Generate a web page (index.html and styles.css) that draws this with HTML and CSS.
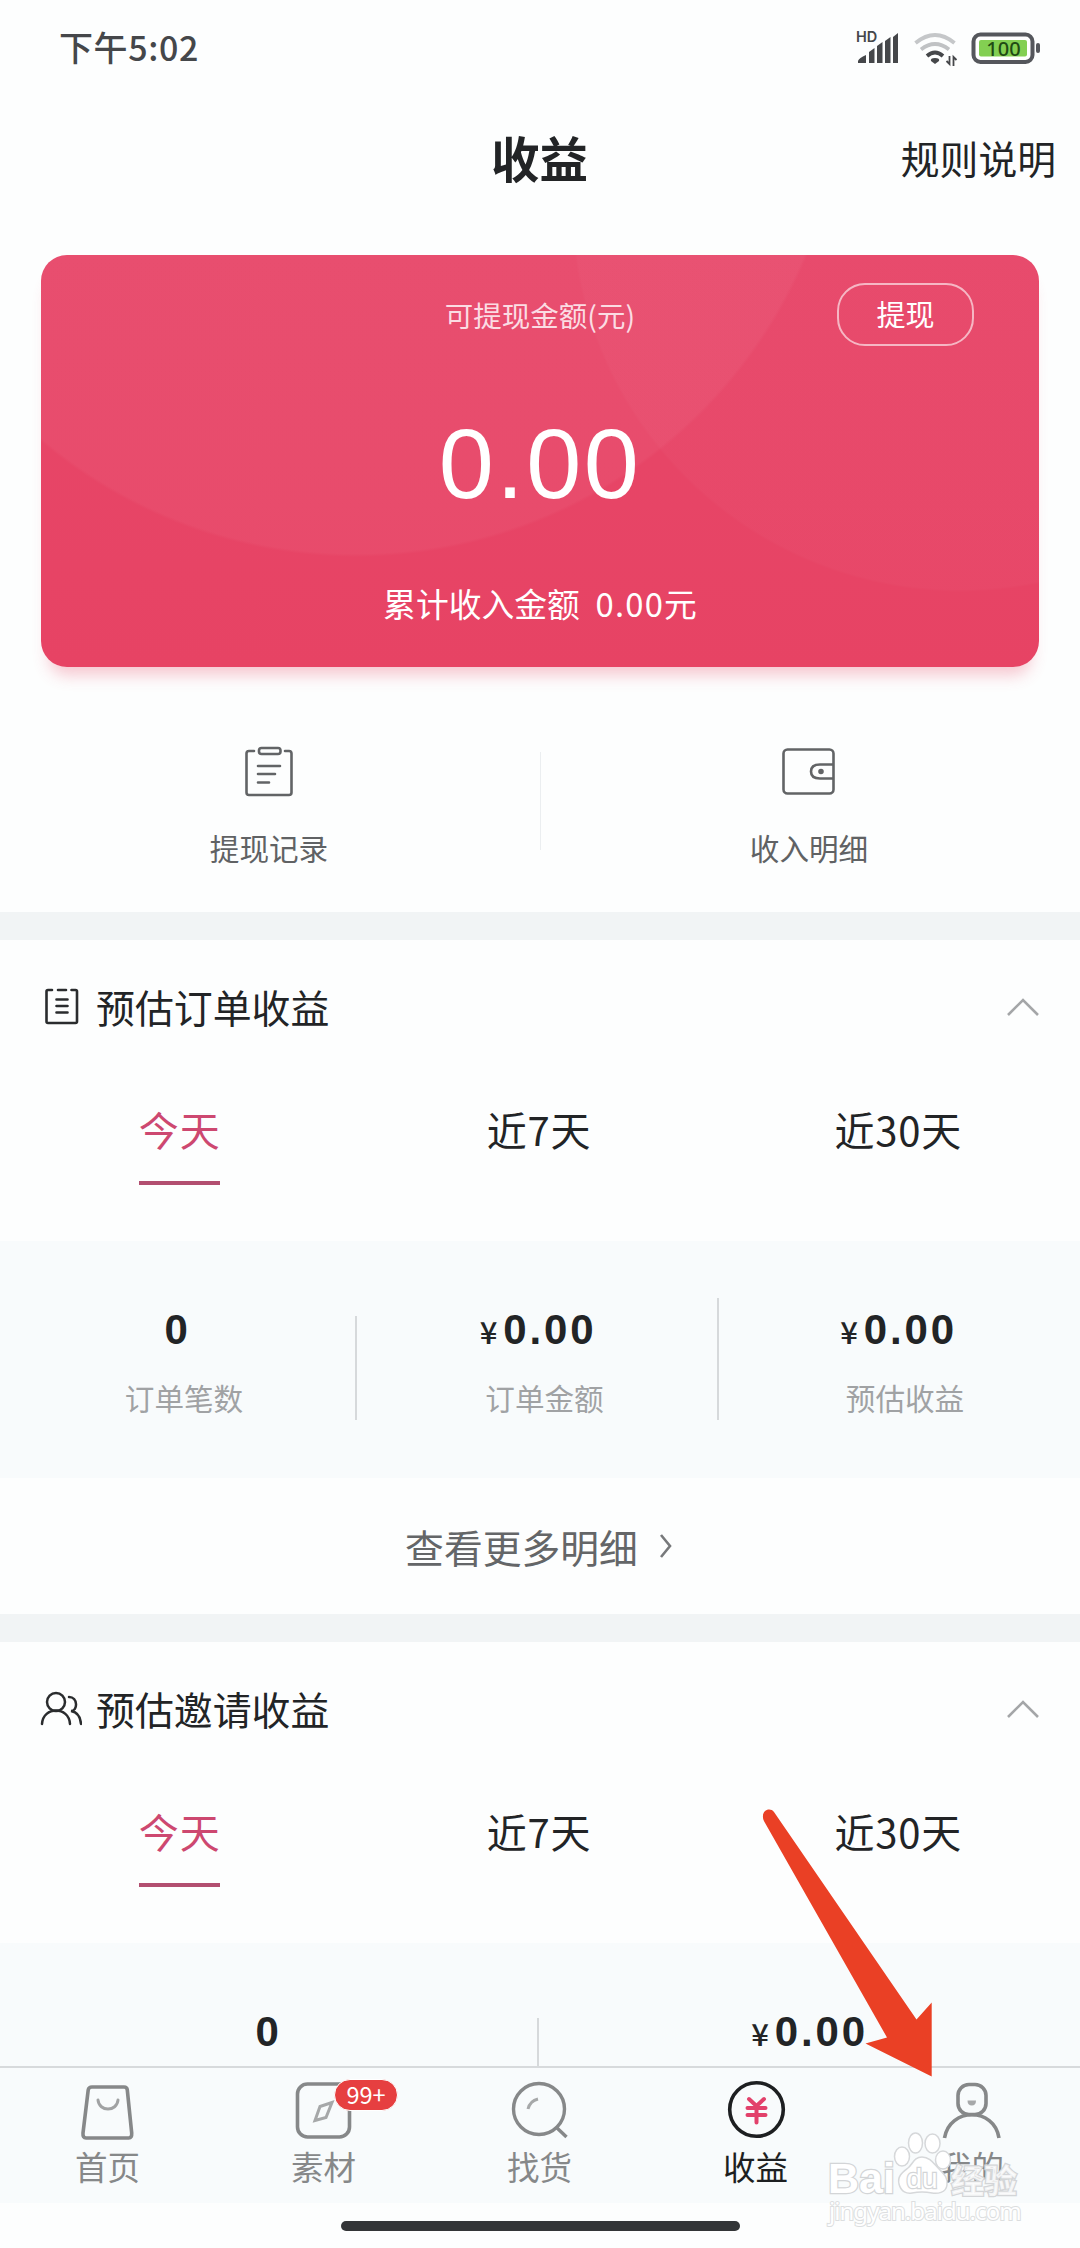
FILE: index.html
```html
<!DOCTYPE html>
<html lang="zh-CN">
<head>
<meta charset="utf-8">
<title>收益</title>
<link rel="stylesheet" href="styles.css">
</head>
<body>
<div class="app">
  <div class="status">
    <span class="time">下午5:02</span>
    <svg class="status-icons" viewBox="856 28 188 40" width="188" height="40">
      <text x="857" y="42" class="hd">HD</text>
      <g fill="#45474a">
        <path d="M859 63v-2q1-3 8-6v8zM870 63V52l5.500-4v15zM878 63V46l5.500-4v21zM886 63V41l5.500-4v26zM894 63V37l5-4v30z"/>
        <path d="M936 64l-4-3q-1-3 4-3t4 3z"/>
      </g>
      <path d="M950.500 56v8l-3-3M954.500 66v-9l3 3" fill="none" stroke="#45474a" stroke-width="1.800"/>
      <g fill="none" stroke-width="3.800">
        <path d="M916.500 43q19.500-16 39 0" stroke="#c5c7c9"/>
        <path d="M922 49.500q14-11 28 0" stroke="#c0c2c4"/>
        <path d="M928 56q8-7 16 0" stroke="#45474a"/>
      </g>
      <rect x="974.500" y="34.500" width="59" height="27.500" rx="7" fill="#fff" stroke="#55575c" stroke-width="4"/>
      <rect x="980" y="40" width="48" height="16.500" rx="2" fill="#83cf52"/>
      <rect x="1037" y="43" width="4" height="10" rx="2" fill="#55575c"/>
      <text x="1004.500" y="56" class="pct">100</text>
    </svg>
  </div>
  <header class="header">
    <h1>收益</h1>
    <a class="rules">规则说明</a>
  </header>

  <main class="content">
    <section class="card">
      <div class="card-label">可提现金额(元)</div>
      <button class="withdraw">提现</button>
      <div class="amount">0.00</div>
      <div class="total">累计收入金额&nbsp; <span>0.00</span>元</div>
    </section>

    <nav class="links">
      <a class="link">
        <svg viewBox="242 744 52 54" width="52" height="54" fill="none" stroke="#626466" stroke-width="2.600" stroke-linecap="round" stroke-linejoin="round">
          <path d="M253 751h-5q-2.500 0-2.500 2.500v39q0 2.500 2.500 2.500h40q2.500 0 2.500-2.500v-39q0-2.500-2.500-2.500h-4"/>
          <rect x="258" y="748" width="21.500" height="6" rx="2.500"/>
          <path d="M257 766h22M257 774h17M257 782.500h11"/>
        </svg>
        <span>提现记录</span>
      </a>
      <a class="link">
        <svg viewBox="783 744 54 54" width="54" height="54" fill="none" stroke="#626466" stroke-width="2.600">
          <rect x="784.500" y="749.500" width="50" height="44" rx="4"/>
          <path d="M834 764.500h-13q-9 0-9 7t9 7h13"/>
          <circle cx="822" cy="771.500" r="1.500" fill="#626466"/>
        </svg>
        <span>收入明细</span>
      </a>
    </nav>

    <section class="panel">
      <div class="panel-head">
        <svg viewBox="40 985 42 46" width="42" height="46" fill="none" stroke="#2a2c2e" stroke-width="2.600" stroke-linecap="round">
          <path d="M52 991h-4q-1.500 0-1.500 1.500v30q0 1.500 1.500 1.500h27.500q1.500 0 1.500-1.500v-30q0-1.500-1.500-1.500h-4M58 991h8M56.500 1000.500h11M56.500 1007h11M56.500 1013.500h11"/>
        </svg>
        <h2>预估订单收益</h2>
        <svg class="fold" viewBox="0 0 34 20" width="34" height="20"><path d="M2 18L17 3l15 15" fill="none" stroke="#a4a6a8" stroke-width="2.600"/></svg>
      </div>
      <div class="tabs"><span class="tab active">今天</span><span class="tab">近7天</span><span class="tab">近30天</span></div>
      <div class="stats three">
        <div class="stat first"><b>0</b><small>订单笔数</small></div>
        <div class="stat"><b><i>¥</i>0.00</b><small>订单金额</small></div>
        <div class="stat"><b><i>¥</i>0.00</b><small>预估收益</small></div>
      </div>
      <a class="more">查看更多明细<svg viewBox="0 0 14 24" width="14" height="24"><path d="M2 1l9 11-9 11" fill="none" stroke="#77797b" stroke-width="2.600"/></svg></a>
    </section>

    <section class="panel">
      <div class="panel-head">
        <svg viewBox="40 984 42 46" width="42" height="46" fill="none" stroke="#2a2c2e" stroke-width="2.500" stroke-linecap="round">
          <circle cx="56" cy="1000" r="9"/>
          <path d="M42 1022c1-18 27-18 28 0M69 995c9 0 9 14 2 14c6 1 9.500 6 10 13"/>
        </svg>
        <h2>预估邀请收益</h2>
        <svg class="fold" viewBox="0 0 34 20" width="34" height="20"><path d="M2 18L17 3l15 15" fill="none" stroke="#a4a6a8" stroke-width="2.600"/></svg>
      </div>
      <div class="tabs"><span class="tab active">今天</span><span class="tab">近7天</span><span class="tab">近30天</span></div>
      <div class="stats two">
        <div class="stat first"><b>0</b></div>
        <div class="stat"><b><i>¥</i>0.00</b></div>
      </div>
    </section>
  </main>

  <nav class="tabbar">
    <a class="item">
      <svg viewBox="76 2078 64 64" width="64" height="64" fill="none" stroke="#868889" stroke-width="3.600" stroke-linejoin="round" stroke-linecap="round">
        <path d="M92 2089h32q3 0 3.300 3l4.400 43q.3 5-3 5H86q-3.300 0-3-5l5.200-43q.5-3 3.800-3z"/>
        <path d="M98 2102c1 12 19 12 20 0" stroke="#a0a2a3" stroke-width="3"/>
      </svg>
      <span>首页</span>
    </a>
    <a class="item">
      <svg viewBox="292 2078 64 64" width="64" height="64" fill="none" stroke="#868889" stroke-width="3.600">
        <rect x="297.500" y="2086" width="52" height="53" rx="10"/>
        <path d="M332 2104.500l-12 4-5 14 11-3z" stroke="#a6a8a9" stroke-width="3"/>
      </svg>
      <em class="badge">99+</em>
      <span>素材</span>
    </a>
    <a class="item">
      <svg viewBox="508 2078 64 64" width="64" height="64" fill="none" stroke="#868889" stroke-width="3.400">
        <circle cx="539" cy="2111" r="25.500"/><path d="M556 2129l10.500 10"/>
        <path d="M528 2111q2-8 10-10" stroke="#a6a8a9" stroke-width="3"/>
      </svg>
      <span>找货</span>
    </a>
    <a class="item current">
      <svg viewBox="724 2078 64 64" width="64" height="64" fill="none" stroke="#1d1f21" stroke-width="3.600">
        <circle cx="756.500" cy="2111.500" r="26.800"/>
        <path d="M749 2101l7.500 7 7.500-7M747.500 2110h18M747.500 2117h18M756.500 2109v15.500" stroke="#e2416b" stroke-width="4" stroke-linecap="round"/>
      </svg>
      <span>收益</span>
    </a>
    <a class="item">
      <svg viewBox="940 2078 64 64" width="64" height="64" fill="none" stroke="#868889" stroke-width="3.600">
        <rect x="958" y="2086.500" width="28" height="30" rx="11"/>
        <path d="M944.500 2140c5-31 50-31 54.500 0"/>
        <path d="M967.500 2102.500h8.500q0 5-4.200 5t-4.300-5z" fill="#a6a8a9" stroke="none"/>
      </svg>
      <span>我的</span>
    </a>
  </nav>
  <div class="home"><i></i></div>

  <div class="watermark">
    <svg viewBox="824 2124 204 74" width="204" height="74">
      <text x="828" y="2193" class="wm-bai" textLength="67" lengthAdjust="spacingAndGlyphs">Bai</text>
      <g fill="#fff" stroke="#d6d8da" stroke-width="1.500">
        <ellipse cx="902" cy="2156.500" rx="7.500" ry="9.500"/><ellipse cx="915.500" cy="2143" rx="7" ry="10"/><ellipse cx="932.500" cy="2143.500" rx="7.500" ry="9.500"/><ellipse cx="943" cy="2160" rx="7.500" ry="9"/>
        <path d="M922 2157c-8 0-9 7-14 11s-11 8-9 16 8 10 13 9 15-1 20 0 14 0 15-8-3-11-8-16-9-12-17-12z"/>
      </g>
      <text x="922" y="2188" class="wm-du">du</text>
      <text x="951" y="2193" class="wm-jy">经验</text>
    </svg>
    <div class="wm-url">jingyan.baidu.com</div>
  </div>
  <svg class="arrow" viewBox="760 1806 174 274" width="174" height="274"><path d="M774 1812L916.500 2019.500 931.700 2002.500V2076.500L865.500 2043.500 887 2037.500 764.500 1822C759 1812 769 1806 774 1812z" fill="#ea4025"/></svg>
</div>
</body>
</html>
```
FILE: styles.css
```css
* { box-sizing: border-box; }
body {
  margin: 0;
  background: #fdfefe;
  font-family: "Noto Sans CJK SC", sans-serif;
  color: #222426;
}
h1, h2 { margin: 0; font-weight: 400; }
i, em { font-style: normal; }
svg { display: block; flex: none; }

.app {
  position: relative;
  display: flex;
  flex-direction: column;
  width: 1080px;
  height: 2248px;
  overflow: hidden;
}

.status {
  display: flex;
  justify-content: space-between;
  align-items: center;
  height: 96px;
  padding: 0 37px 0 59px;
}
.time { font-size: 34px; line-height: 40px; font-weight: 500; letter-spacing: .6px; color: #45474a; margin-top: -2px; }
.hd { font: 600 14.500px Inter, sans-serif; fill: #45474a; }
.pct { font: 500 20px "Noto Sans", sans-serif; fill: #1f4a14; text-anchor: middle; }

.header {
  display: grid;
  grid-template-columns: 1fr auto 1fr;
  align-items: center;
  height: 126px;
  padding: 0 24px 0 23px;
}
.header h1 { grid-column: 2; font-size: 48.500px; line-height: 60px; font-weight: 700; margin-top: -4px; }
.rules { justify-self: end; font-size: 38.800px; line-height: 50px; margin-top: -4px; }

.content { flex: 1; min-height: 0; overflow: hidden; padding-top: 33px; }

.card {
  display: grid;
  grid-template-columns: 1fr auto 1fr;
  grid-template-rows: 118px 178px 1fr;
  align-items: center;
  justify-items: center;
  width: 998px;
  height: 412px;
  margin: 0 auto;
  border-radius: 26px;
  color: #fff;
  background:
    radial-gradient(circle 489px at 315px -187px, rgba(255,255,255,.04) 99.300%, transparent 100%),
    radial-gradient(circle 389px at 919px -52px, rgba(255,255,255,.025) 99.300%, transparent 100%),
    linear-gradient(#e74769, #e74364);
  box-shadow: 0 16px 16px -8px rgba(232,68,101,.3);
}
.card-label { grid-column: 2; padding-top: 2px; font-size: 28.500px; line-height: 36px; color: #fbdce3; }
.withdraw {
  width: 137px;
  height: 63px;
  padding: 0 0 3px;
  margin-left: 137px;
  border: 2px solid rgba(255,255,255,.6);
  border-radius: 28px;
  background: none;
  color: #fff;
  font: 400 29px/36px "Noto Sans CJK SC", sans-serif;
}
.amount { grid-column: 1 / 4; margin-top: 3px; font: 400 99px/94px "Liberation Sans", sans-serif; letter-spacing: 2.500px; }
.total { grid-column: 1 / 4; padding-bottom: 13px; font-size: 32.800px; line-height: 40px; }
.total span { margin-left: 1px; letter-spacing: 1.200px; }

.links {
  display: grid;
  grid-template-columns: 1fr 1fr;
  height: 245px;
  padding-top: 77px;
  background: linear-gradient(#ebeef0, #ebeef0) center 85px / 1px 98px no-repeat;
}
.link {
  display: flex;
  flex-direction: column;
  align-items: center;
  gap: 30px;
  padding-right: 2px;
  font-size: 29.600px;
  line-height: 40px;
  color: #606264;
}

.panel { border-top: 28px solid #f1f4f5; }
.panel-head {
  display: flex;
  align-items: center;
  height: 134px;
  padding: 0 40px 0 40px;
}
.panel-head h2 { margin: -3px 0 0 14px; font-size: 38.900px; line-height: 50px; }
.fold { margin-left: auto; }
.tabs { display: grid; grid-template-columns: repeat(3, 1fr); justify-items: center; height: 167px; padding: 28px 2px 0 0; }
.tab {
  height: 83px;
  padding-top: 2px;
  font-size: 40px;
  line-height: 50px;
  letter-spacing: .8px;
  border-bottom: 4.500px solid transparent;
}
.active { color: #cd4870; border-color: #b24f70; }
.stats { display: grid; height: 237px; background: #f8fbfc; }
.three { grid-template-columns: 357px 362px 361px; }
.two { grid-template-columns: 539px 541px; }
.stat {
  display: flex;
  flex-direction: column;
  align-items: center;
  padding: 64px 2px 0 0;
  background: linear-gradient(#d6d9db, #d6d9db) right 75px / 2px 104px no-repeat;
}
.stat:nth-child(2) { padding-right: 0; background-position: right 57px; background-size: 2px 122px; }
.stat:last-child { background: none; }
.stat b { font: 700 42px/50px "Liberation Sans", sans-serif; letter-spacing: 2.800px; white-space: nowrap; }
.stat i { margin-right: 6px; font: 500 31px/40px "Noto Sans CJK SC", sans-serif; letter-spacing: 0; }
.stat small { margin: 23px 0 0 13px; font-size: 29.600px; line-height: 40px; color: #a0a2a4; }
.more {
  display: flex;
  justify-content: center;
  align-items: center;
  gap: 21px;
  height: 136px;
  padding-right: 2px;
  font-size: 38.800px;
  line-height: 50px;
  color: #646668;
}

.tabbar {
  display: grid;
  grid-template-columns: repeat(5, 1fr);
  height: 137px;
  border-top: 2px solid #d7dadc;
  background: #f8fbfc;
}
.item {
  position: relative;
  display: flex;
  flex-direction: column;
  align-items: center;
  gap: 5px;
  padding: 8px 1px 0 0;
  font-size: 32.500px;
  line-height: 42px;
  color: #868889;
}
.current { color: #1d1f21; }
.badge {
  position: absolute;
  left: 118px;
  top: 11px;
  width: 64px;
  height: 32px;
  border: 1px solid #fff;
  border-radius: 16px;
  background: #e63f40;
  color: #fff;
  font-size: 23.500px;
  line-height: 29px;
  text-align: center;
}
.home { display: flex; justify-content: center; height: 45px; padding-top: 18px; }
.home i { width: 399px; height: 10px; border-radius: 5px; background: #333537; }

.watermark { position: absolute; left: 824px; top: 2124px; }
.watermark svg { overflow: visible; }
.watermark text { fill: #fff; stroke: #d3d5d7; stroke-width: 2.500px; paint-order: stroke; }
.wm-bai { font: 700 43px "Liberation Sans", sans-serif; }
.watermark .wm-du { font: 400 28px "Liberation Sans", sans-serif; text-anchor: middle; }
.watermark .wm-jy { font: 700 33px "Noto Sans CJK SC", sans-serif; fill-opacity: .75; }
.wm-url {
  margin: -4px 0 0 5px;
  font: 400 24px/34px "Noto Sans", sans-serif;
  letter-spacing: -.95px;
  color: #fff;
  -webkit-text-stroke: 2px #dcdee0;
  paint-order: stroke fill;
}
.arrow { position: absolute; left: 760px; top: 1806px; }
```
